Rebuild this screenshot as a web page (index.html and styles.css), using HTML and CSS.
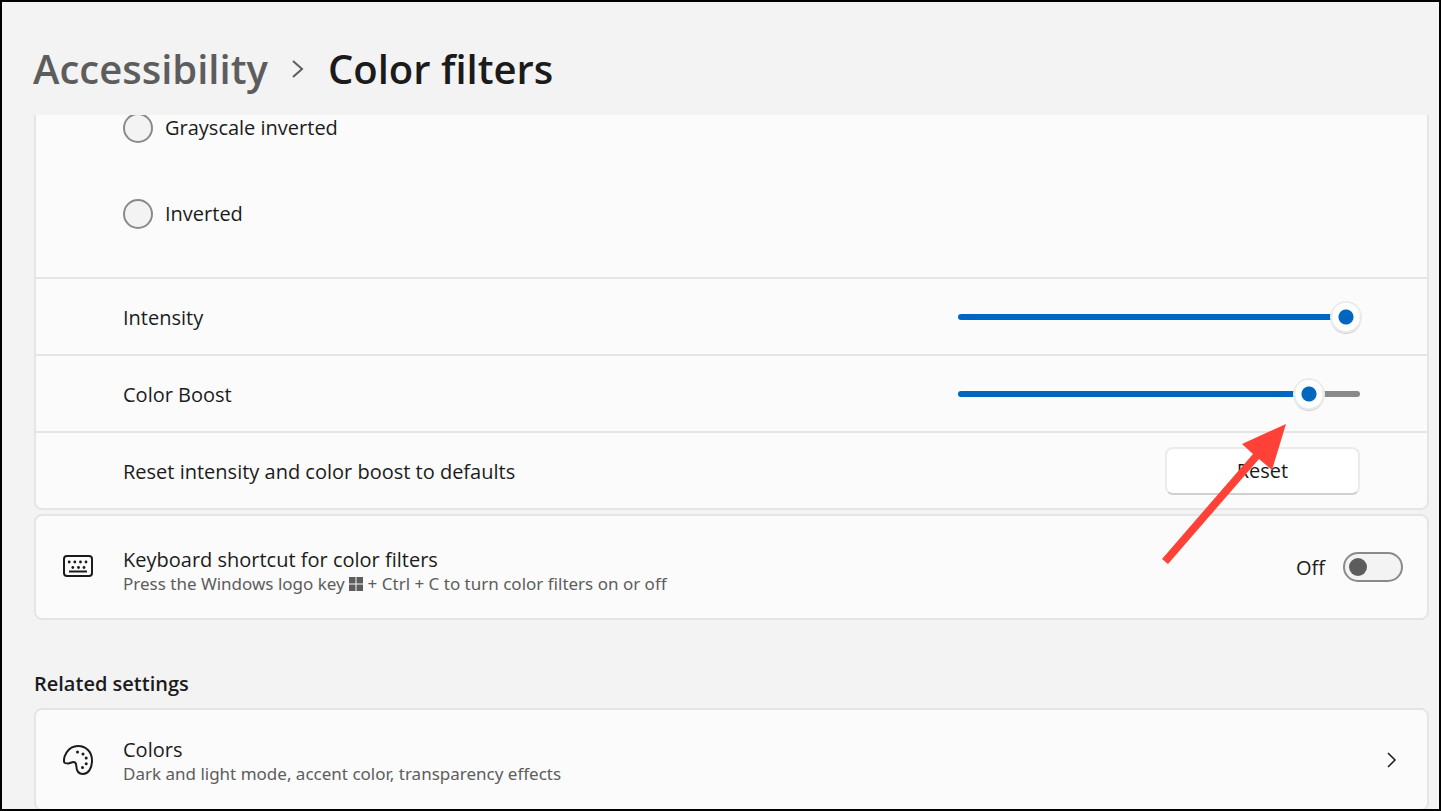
FILE: index.html
```
<!DOCTYPE html>
<html lang="en">
<head>
  <meta charset="UTF-8" />
  <meta name="viewport" content="width=device-width, initial-scale=1.0"/>
  <title>Color filters</title>
  <link rel="stylesheet" href="styles.css">
</head>
<body>
  <div class="window">
    <header class="breadcrumb">
      <a href="#">Accessibility</a>
      <svg class="crumb-arrow" width="12" height="18" viewBox="0 0 12 18" fill="none" stroke="#5d5d5d" stroke-width="2"><path d="M1 1l9 8-9 8"/></svg>
      <h1>Color filters</h1>
    </header>

    <main class="content">
      <section class="card group">
        <div class="options">
          <label class="option"><input type="radio" name="filter" value="grayscale-inverted"> Grayscale inverted</label>
          <label class="option"><input type="radio" name="filter" value="inverted"> Inverted</label>
        </div>
        <div class="row">
          <label class="name" for="intensity">Intensity</label>
          <input type="range" id="intensity" min="0" max="100" value="100" style="--fill: 100%">
        </div>
        <div class="row">
          <label class="name" for="boost">Color Boost</label>
          <input type="range" id="boost" min="0" max="100" value="90" style="--fill: 90%">
        </div>
        <div class="row">
          <span class="name">Reset intensity and color boost to defaults</span>
          <div class="reset">
            <button type="button">Reset</button>
            <svg class="pointer" width="130" height="148" viewBox="0 0 130 148" fill="#ff4137"><path d="M126 4L112 50 99 39 8 144 2 139 93 34 82 24z"/></svg>
          </div>
        </div>
      </section>

      <section class="card item">
        <svg class="icon" width="30" height="30" viewBox="0 0 30 30" fill="none" stroke="#1b1b1b" stroke-width="2">
          <rect x="1" y="4" width="28" height="20" rx="3"/>
          <path d="M6 19.500h18"/>
          <g fill="#1b1b1b" stroke="none">
            <circle cx="6.200" cy="10" r="1.400"/><circle cx="11.800" cy="10" r="1.400"/><circle cx="17.500" cy="10" r="1.400"/><circle cx="23" cy="10" r="1.400"/>
            <circle cx="9.800" cy="15.500" r="1.400"/><circle cx="15.500" cy="15.500" r="1.400"/><circle cx="21" cy="15.500" r="1.400"/>
          </g>
        </svg>
        <div class="text">
          <label for="shortcut">Keyboard shortcut for color filters</label>
          <p>Press the Windows logo key <svg class="winkey" width="14" height="14" viewBox="0 0 14 14" fill="#5d5d5d"><path d="M0 0h6.500v6.500H0zM7.500 0H14v6.500H7.500zM0 7.500h6.500V14H0zM7.500 7.500H14V14H7.500z"/></svg> + Ctrl + C to turn color filters on or off</p>
        </div>
        <span class="state">Off</span>
        <input type="checkbox" class="toggle" id="shortcut">
      </section>

      <h2>Related settings</h2>

      <a class="card item link" href="#">
        <svg class="icon" width="30" height="30" viewBox="0 0 30 30" fill="none" stroke="#1b1b1b" stroke-width="2">
          <path d="M1.300 17.500C0 13 4 1 15 1c8 0 14 6 14 14.500C29 24 25 29 20 29c-4 0-6.500-3-6.700-8C13.200 18.500 12.500 17 10.500 17c-2 0-3.500 1.500-5.500 1.500-1.700 0-3.100 0-3.700-1z"/>
          <g fill="#1b1b1b" stroke="none">
            <circle cx="14.500" cy="7" r="1.500"/><circle cx="20" cy="9" r="1.500"/><circle cx="23.200" cy="13" r="1.500"/><circle cx="23.200" cy="18.700" r="1.500"/><circle cx="19.500" cy="22.500" r="1.500"/>
          </g>
        </svg>
        <div class="text">
          <span>Colors</span>
          <p>Dark and light mode, accent color, transparency effects</p>
        </div>
        <svg class="chevron" width="10" height="16" viewBox="0 0 10 16" fill="none" stroke="#1b1b1b" stroke-width="1.500"><path d="M1 1l7 7-7 7"/></svg>
      </a>
    </main>
  </div>
</body>
</html>
```
FILE: styles.css
```
* {
  box-sizing: border-box;
}
body {
  margin: 0;
  font-family: "Open Sans", "Noto Sans", sans-serif;
  font-size: 20px;
  line-height: 28px;
  color: #1b1b1b;
}
.window {
  display: flex;
  flex-direction: column;
  height: 100vh;
  border: 2px solid #000;
  background: #f3f3f3;
  overflow: hidden;
}
.breadcrumb {
  display: flex;
  align-items: center;
  gap: 24px;
  padding: 39px 31px 18px;
  font-size: 40px;
  font-weight: 600;
  line-height: 56px;
}
.breadcrumb a {
  color: #5d5d5d;
  text-decoration: none;
}
h1 {
  margin: 0;
  font-size: 40px;
  font-weight: 600;
}
.content {
  flex: 1;
  min-height: 0;
  padding: 0 10px 0 32px;
  overflow: hidden;
}
.card {
  border: 2px solid #e5e5e5;
  border-radius: 8px;
  background: #fbfbfb;
}
/* list is scrolled, the top of the group is out of view */
.group {
  margin-top: -32px;
}
.options {
  padding: 0 0 20px 87px;
}
.option {
  display: flex;
  align-items: center;
  gap: 12px;
  height: 86px;
}
.option input {
  appearance: none;
  width: 30px;
  height: 30px;
  margin: 0;
  border: 2px solid #8a8a8a;
  border-radius: 50%;
  background: #f3f3f3;
}
.option input:checked {
  border: 9px solid #0067c0;
}
.row {
  display: flex;
  align-items: center;
  justify-content: space-between;
  height: 77px;
  padding: 0 67px 0 87px;
  border-top: 2px solid #e5e5e5;
}
.name {
  padding-top: 3px;
}
input[type="range"] {
  appearance: none;
  width: 402px;
  height: 32px;
  margin: 0;
  background: none;
}
input[type="range"]::-webkit-slider-runnable-track {
  height: 6px;
  border-radius: 3px;
  background: linear-gradient(to right, #0067c0 var(--fill), #8a8a8a var(--fill));
}
input[type="range"]::-webkit-slider-thumb {
  appearance: none;
  width: 28px;
  height: 28px;
  margin-top: -11px;
  border-radius: 50%;
  background: radial-gradient(circle, #0067c0 7px, #fff 8px);
  box-shadow: 0 0 0 2px #ebebeb, 0 2px 1px 1px #ccc;
}
.reset {
  position: relative;
}
.reset button {
  display: block;
  width: 195px;
  height: 48px;
  border: 2px solid #ebebeb;
  border-bottom-color: #d0d0d0;
  border-radius: 8px;
  background: #fff;
  color: inherit;
  font: inherit;
}
.pointer {
  position: absolute;
  z-index: 1;
  left: -5px;
  top: -27px;
  pointer-events: none;
}
.item {
  display: flex;
  align-items: center;
  height: 106px;
  margin-top: 4px;
  padding: 0 24px 0 27px;
  color: inherit;
  text-decoration: none;
}
.link {
  height: 103px;
}
.icon {
  margin-right: 30px;
}
.text {
  flex: 1;
  padding-top: 9px;
}
.link .text {
  padding-top: 4px;
}
.text label,
.text span {
  display: block;
  line-height: 24px;
}
.text p {
  margin: 0;
  font-family: "Noto Sans", "Open Sans", sans-serif;
  font-size: 17px;
  line-height: 24px;
  color: #5d5d5d;
}
.winkey {
  vertical-align: -1px;
}
.state {
  padding-top: 2px;
  margin-right: 18px;
}
.toggle {
  appearance: none;
  display: flex;
  align-items: center;
  width: 60px;
  height: 30px;
  margin: 0;
  padding: 0 4px;
  border: 2px solid #8a8a8a;
  border-radius: 15px;
  background: #f3f3f3;
}
.toggle::before {
  content: "";
  width: 18px;
  height: 18px;
  border-radius: 50%;
  background: #5d5d5d;
}
.toggle:checked {
  justify-content: flex-end;
  border-color: #0067c0;
  background: #0067c0;
}
.toggle:checked::before {
  background: #fff;
}
h2 {
  margin: 50px 0 10px;
  font-size: 20px;
  font-weight: 600;
  line-height: 28px;
}
.chevron {
  margin-right: 6px;
}
```
